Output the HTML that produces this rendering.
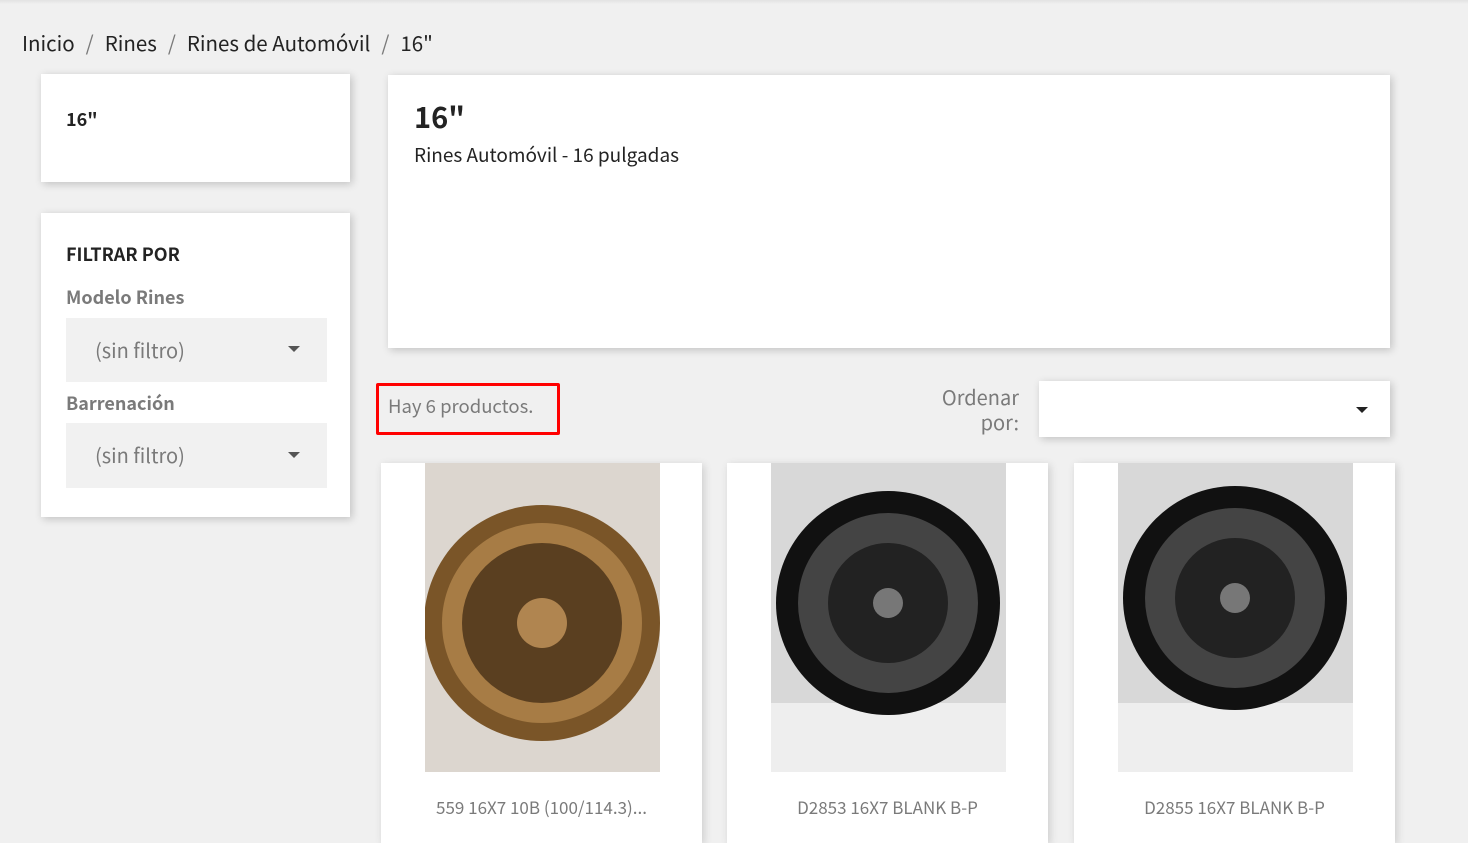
<!DOCTYPE html>
<html><head><meta charset="utf-8"><style>
*{margin:0;padding:0;box-sizing:border-box}
body{width:1468px;height:835px;background:#f0f0f0;font-family:"Noto Sans CJK JP","Liberation Sans",sans-serif;color:#232323;position:relative;overflow:hidden}
body:before{content:"";position:absolute;left:0;top:0;width:100%;height:4px;background:linear-gradient(#e2e2e2,#f0f0f0)}
.abs{position:absolute}
.card{position:absolute;background:#fff;box-shadow:2px 2px 8px rgba(0,0,0,.2)}
.bc{left:22px;top:27px;font-size:20.5px;color:#232323;white-space:nowrap}
.bc span{color:#7a7a7a;margin:0 11px}
.sel{position:absolute;background:#f1f1f1;color:#7a7a7a;font-size:20px;padding:17px 29px}
.tri{position:absolute;width:0;height:0;border-left:6px solid transparent;border-right:6px solid transparent;border-top:6px solid #555}
.prod{position:absolute;top:463px;width:321px;height:380px;background:#fff;box-shadow:2px 2px 8px rgba(0,0,0,.15)}
.img{position:absolute;left:44px;top:0;width:235px;height:309px;background:#e8e6e3;overflow:hidden}
.name{position:absolute;top:331px;width:100%;text-align:center;font-size:17px;color:#7a7a7a}
</style></head><body>
<div class="abs bc">Inicio<span>/</span>Rines<span>/</span>Rines de Automóvil<span>/</span>16"</div>

<div class="card" style="left:41px;top:74px;width:309px;height:108px"><div class="abs" style="left:25px;top:32px;font-weight:bold;font-size:18px">16"</div></div>

<div class="card" style="left:41px;top:213px;width:309px;height:304px">
<div class="abs" style="left:25px;top:28px;font-weight:bold;font-size:18px">FILTRAR POR</div>
<div class="abs" style="left:25px;top:71px;font-weight:bold;font-size:18px;color:#7a7a7a">Modelo Rines</div>
<div class="sel" style="left:25px;top:105px;width:261px;height:64px">(sin filtro)</div>
<div class="tri" style="left:247px;top:133px"></div>
<div class="abs" style="left:25px;top:177px;font-weight:bold;font-size:18px;color:#7a7a7a">Barrenación</div>
<div class="sel" style="left:25px;top:210px;width:261px;height:65px">(sin filtro)</div>
<div class="tri" style="left:247px;top:239px"></div>
</div>

<div class="card" style="left:388px;top:75px;width:1002px;height:273px">
<div class="abs" style="left:26px;top:20px;font-weight:bold;font-size:29px">16"</div>
<div class="abs" style="left:26px;top:66px;font-size:19px">Rines Automóvil - 16 pulgadas</div>
</div>

<div class="abs" style="left:376px;top:383px;width:184px;height:52px;border:3px solid #f00;border-radius:2px"></div>
<div class="abs" style="left:388px;top:393px;font-size:18.5px;color:#7a7a7a">Hay 6 productos.</div>
<div class="abs" style="left:880px;top:384px;width:139px;text-align:right;font-size:20px;line-height:25px;color:#7a7a7a">Ordenar<br>por:</div>
<div class="card" style="left:1039px;top:381px;width:351px;height:56px"><div class="tri" style="left:317px;top:26px;border-top-color:#222"></div></div>

<div class="prod" style="left:381px"><div class="img" style="background:#dcd6cf">
<svg width="235" height="309"><circle cx="117" cy="160" r="118" fill="#7a5528"/><circle cx="117" cy="160" r="100" fill="#a77c45"/><circle cx="117" cy="160" r="80" fill="#5a3f20"/><circle cx="117" cy="160" r="25" fill="#b08550"/></svg></div>
<div class="name">559 16X7 10B (100/114.3)...</div></div>
<div class="prod" style="left:727px"><div class="img" style="background:#d8d8d8">
<svg width="235" height="309"><rect y="240" width="235" height="69" fill="#eee"/><circle cx="117" cy="140" r="112" fill="#111"/><circle cx="117" cy="140" r="90" fill="#444"/><circle cx="117" cy="140" r="60" fill="#222"/><circle cx="117" cy="140" r="15" fill="#777"/></svg></div>
<div class="name">D2853 16X7 BLANK B-P</div></div>
<div class="prod" style="left:1074px"><div class="img" style="background:#d8d8d8">
<svg width="235" height="309"><rect y="240" width="235" height="69" fill="#eee"/><circle cx="117" cy="135" r="112" fill="#111"/><circle cx="117" cy="135" r="90" fill="#444"/><circle cx="117" cy="135" r="60" fill="#222"/><circle cx="117" cy="135" r="15" fill="#777"/></svg></div>
<div class="name">D2855 16X7 BLANK B-P</div></div>
</body></html>
